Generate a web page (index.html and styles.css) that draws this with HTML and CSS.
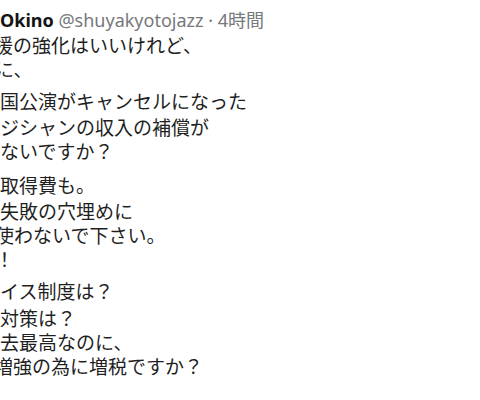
FILE: index.html
```html
<!DOCTYPE html>
<html lang="ja">
<head>
<meta charset="utf-8">
<link rel="stylesheet" href="styles.css">
</head>
<body>
<article class="tweet">
  <header class="head"><span class="name">Okino</span> <span class="meta">@shuyakyotojazz · 4時間</span></header>
  <div class="text">
    <p class="line cut6">援の強化はいいけれど、</p>
    <p class="line cut5">に、</p>
    <p class="line gap-l">国公演がキャンセルになった</p>
    <p class="line gap-xs">ジシャンの収入の補償が</p>
    <p class="line">ないですか？</p>
    <p class="line gap-xl">取得費も。</p>
    <p class="line gap-xs">失敗の穴埋めに</p>
    <p class="line cut5">使わないで下さい。</p>
    <p class="line cut5">！</p>
    <p class="line gap-l">イス制度は？</p>
    <p class="line gap-s">対策は？</p>
    <p class="line">去最高なのに、</p>
    <p class="line cut6">増強の為に増税ですか？</p>
  </div>
</article>
</body>
</html>
```
FILE: styles.css
```css
html, body {
  margin: 0;
  padding: 0;
  background: #ffffff;
  overflow: hidden;
}
.tweet {
  width: 480px;
  height: 400px;
  padding-top: 8px;
  box-sizing: border-box;
  font-family: "Noto Sans", "Noto Sans CJK JP", sans-serif;
  color: #1f1f1f;
}
.head {
  height: 25px;
  line-height: 25px;
  font-size: 18px;
  white-space: nowrap;
}
.name {
  font-weight: 700;
  color: #141414;
}
.meta {
  color: #76797c;
}
.text {
  font-family: "Noto Sans CJK JP", sans-serif;
  font-size: 19px;
  line-height: 24px;
}
.line {
  margin: 0;
  white-space: nowrap;
}
.cut5 { margin-left: -5px; }
.cut6 { margin-left: -6px; }
.gap-xs { margin-top: 2px; }
.gap-s { margin-top: 3px; }
.gap-l { margin-top: 8px; }
.gap-xl { margin-top: 10px; }
```
